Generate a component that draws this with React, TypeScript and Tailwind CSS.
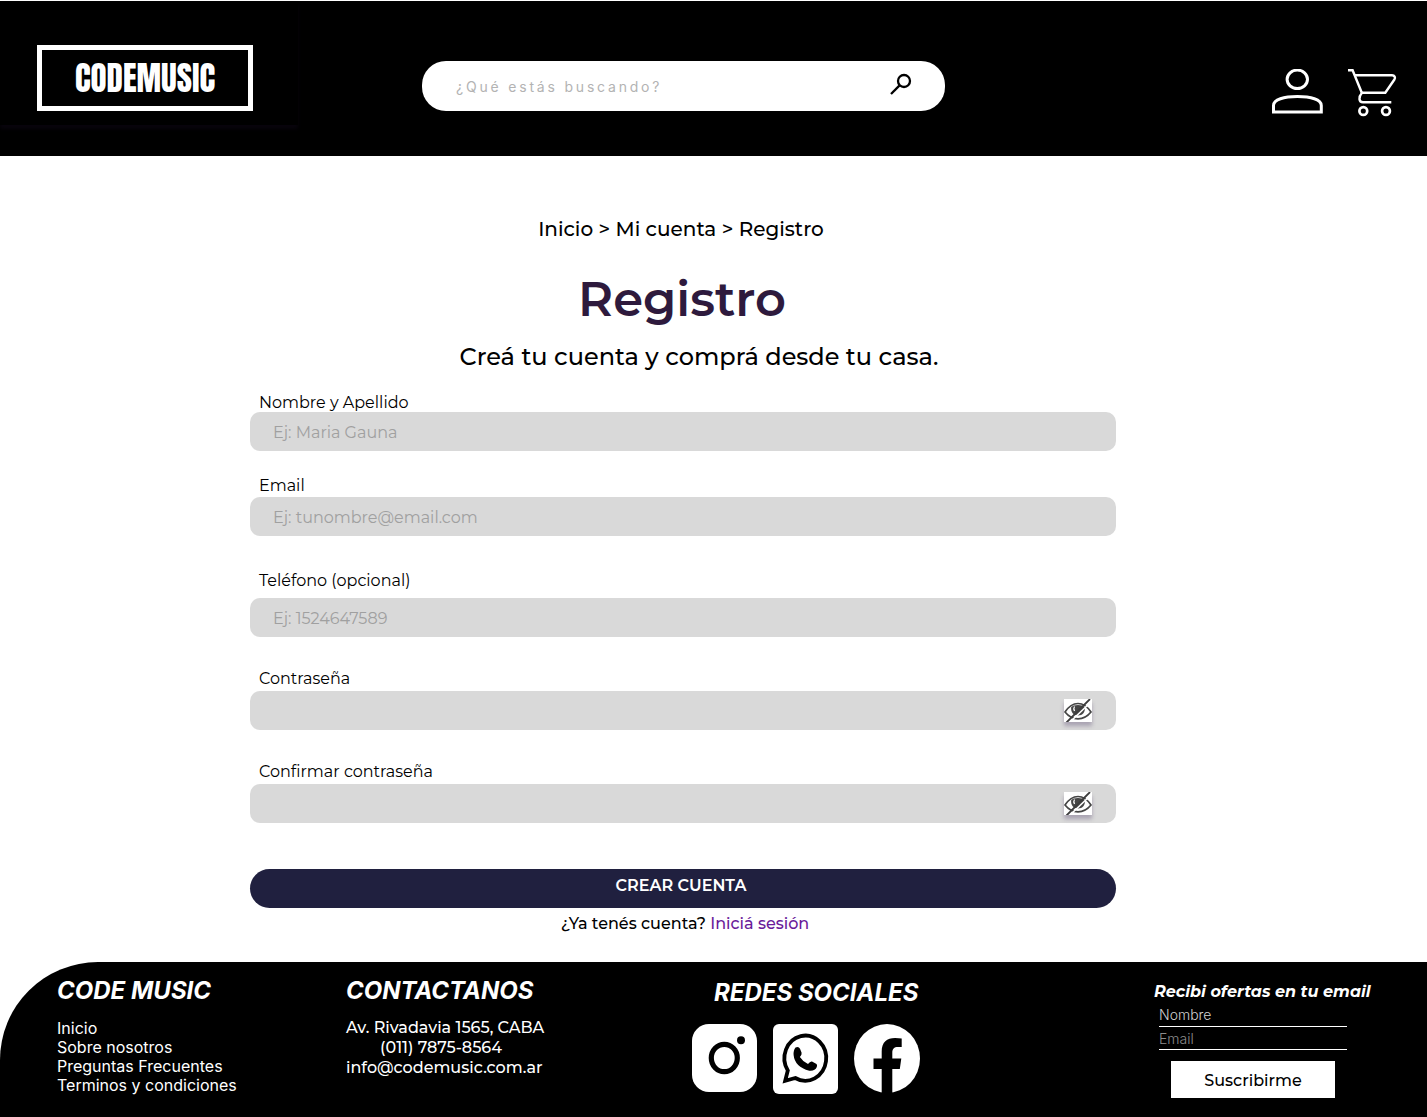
import React from "react";

type Field = {
  id: string;
  label: string;
  placeholder?: string;
  type: string;
  spacing: string;
};

const fields: Field[] = [
  { id: "nombre", label: "Nombre y Apellido", placeholder: "Ej: Maria Gauna", type: "text", spacing: "mt-[21px]" },
  { id: "email", label: "Email", placeholder: "Ej: tunombre@email.com", type: "email", spacing: "mt-[26px] gap-[2px]" },
  { id: "telefono", label: "Teléfono (opcional)", placeholder: "Ej: 1524647589", type: "tel", spacing: "mt-9 gap-2" },
  { id: "clave", label: "Contraseña", type: "password", spacing: "mt-[33px] gap-[3px]" },
  { id: "clave2", label: "Confirmar contraseña", type: "password", spacing: "mt-[33px] gap-[3px]" },
];

const links = ["Inicio", "Sobre nosotros", "Preguntas Frecuentes", "Terminos y condiciones"];

function SearchIcon() {
  return (
    <svg width="22" height="22" viewBox="0 0 22 22" fill="none" stroke="black" strokeWidth="2.3">
      <circle cx="14" cy="8" r="6" />
      <path d="M9.6 12.4 1 21" />
    </svg>
  );
}

function UserIcon() {
  return (
    <svg width="51" height="48" viewBox="0 0 51 48" fill="none" stroke="white" strokeWidth="3">
      <ellipse cx="25.3" cy="10.3" rx="10.2" ry="9.2" />
      <path d="M1.5 43V36.500C1.5 30.500 12 27.500 25.4 27.500s23.900 3 23.900 9v6.500z" />
    </svg>
  );
}

function CartIcon() {
  return (
    <svg width="49" height="48" viewBox="0 0 49 48" fill="none" stroke="white" strokeWidth="2.4">
      <path d="M0 1.200h4.600L14 24.200" />
      <path d="M7 6.200h37c2.600 0 3.700 2.300 2.400 4.300L37.300 23.700H14c-3.800 4.300-3.300 9.500 1 9.500h28.300" />
      <circle cx="15.300" cy="42" r="3.900" strokeWidth="2.700" />
      <circle cx="38" cy="42" r="3.900" strokeWidth="2.700" />
    </svg>
  );
}

function EyeOffIcon() {
  return (
    <svg width="28" height="23" viewBox="0 0 28 23" fill="none">
      <path d="M1 13C5 7 9.500 4.500 14 4.500S23 7 27 13c-4 5-8.500 6.800-13 6.800S5 18 1 13z" stroke="#454545" strokeWidth="1.700" />
      <path d="M7.200 8C6.500 13 9.500 16.500 14 16.500s7.500-3.500 6.800-8.500C18.500 5.200 9.500 5.200 7.200 8z" fill="#454545" />
      <path d="M10.500 7.500c-1 1.500-.800 3 0 4.500" stroke="white" strokeWidth="1.300" />
      <path d="M5 24 28.500 1.500" stroke="white" strokeWidth="1.500" />
      <path d="M2.500 23.500 26 0" stroke="#3c3c3c" strokeWidth="1.800" />
    </svg>
  );
}

function InstagramIcon() {
  return (
    <svg width="65" height="68" viewBox="0 0 65 68">
      <rect width="65" height="68" rx="17" fill="white" />
      <ellipse cx="32.300" cy="34" rx="13" ry="13.700" fill="none" stroke="black" strokeWidth="5.200" />
      <circle cx="49" cy="16.300" r="4" fill="black" />
    </svg>
  );
}

function WhatsappIcon() {
  return (
    <svg width="65" height="70" viewBox="0 0 65 70">
      <rect width="65" height="70" rx="6" fill="white" />
      <path
        d="M12.200 56.800 14.800 46.500A20.900 22.600 0 1 1 22.300 54z"
        fill="none"
        stroke="black"
        strokeWidth="3.800"
      />
      <path
        d="M22.500 23.500q3.200-1.500 4.500 1.300l1.600 4q.500 1.700-1.700 4.200 3 4.800 8.100 7 2.200-3 4-2.500l4.500 2.500q1 .800.300 3-2 4.400-7.500 3.700-14.500-3.700-15.700-15.700-.300-5 1.900-7.500z"
        fill="black"
      />
    </svg>
  );
}

function FacebookIcon() {
  return (
    <svg width="66" height="69" viewBox="0 0 66 69">
      <ellipse cx="33" cy="34.500" rx="33" ry="34.500" fill="white" />
      <path
        d="M27.700 69V45H19.500V34.500h8.200V27.500C27.700 18 33 14 41 14q4 0 6.700.600v8.400H44c-4 0-5.700 2-5.700 5.500v6H47.300L45.800 45H38.300V69z"
        fill="black"
      />
    </svg>
  );
}

export default function App() {
  return (
    <div className="min-h-screen bg-white font-['Montserrat','Inter',sans-serif] text-black">
      <header className="flex h-[156px] items-start border-t border-white bg-black pr-[30px]">
        <a
          href="#"
          className="flex h-[124px] w-[298px] shrink-0 items-start pl-[37px] pt-11 shadow-[0_4px_4px_#08040c]"
        >
          <span className="flex h-[66px] w-[216px] items-center justify-center border-[5px] border-white font-['Anton','Roboto_Condensed',sans-serif] text-[33px] leading-none text-white">
            CODEMUSIC
          </span>
        </a>
        <form className="ml-[124px] mr-[327px] mt-[60px] flex h-[50px] flex-1 items-center rounded-3xl bg-white pl-[34px] pr-[33px]">
          <input
            type="search"
            aria-label="Buscar"
            placeholder="¿Qué estás buscando?"
            className="min-w-0 flex-1 bg-transparent pt-[2px] font-['Inter',sans-serif] text-sm tracking-[0.2em] outline-none placeholder:text-[#b3b3b3]"
          />
          <button type="button" aria-label="Buscar" className="pb-1">
            <SearchIcon />
          </button>
        </form>
        <nav className="flex shrink-0 gap-[25px] pt-[68px]">
          <a href="#" aria-label="Mi cuenta">
            <UserIcon />
          </a>
          <a href="#" aria-label="Carrito">
            <CartIcon />
          </a>
        </nav>
      </header>

      <main className="flex flex-col pb-[27px] pl-[250px] pr-[311px] pt-[57px]">
        <nav className="pr-1 text-center text-xl font-medium leading-8">
          <a href="#">Inicio</a> &gt; <a href="#">Mi cuenta</a> &gt; <a href="#">Registro</a>
        </nav>
        <h1 className="mt-6 pr-[2px] text-center text-5xl font-semibold leading-[60px] text-[#2e1a3d]">Registro</h1>
        <p className="ml-8 mt-3 text-center text-2xl font-medium leading-8">
          Creá tu cuenta y comprá desde tu casa.
        </p>
        <form className="flex flex-col">
          {fields.map((f) => (
            <div key={f.id} className={`flex flex-col ${f.spacing}`}>
              <label htmlFor={f.id} className="ml-[9px] leading-[18px]">
                {f.label}
              </label>
              <div className="flex h-[39px] items-center rounded-[10px] bg-[#d9d9d9] pl-[23px] pr-6">
                <input
                  id={f.id}
                  type={f.type}
                  placeholder={f.placeholder}
                  className="min-w-0 flex-1 bg-transparent pt-[2px] outline-none placeholder:text-[#a0a0a0]"
                />
                {f.type === "password" && (
                  <button
                    type="button"
                    aria-label="Mostrar contraseña"
                    className="bg-white shadow-[0_4px_4px_rgba(60,40,90,0.3)]"
                  >
                    <EyeOffIcon />
                  </button>
                )}
              </div>
            </div>
          ))}
          <button
            type="submit"
            className="mt-[46px] h-[39px] rounded-full bg-[#20203f] pb-[6px] pr-1 font-semibold text-white"
          >
            CREAR CUENTA
          </button>
        </form>
        <p className="mt-[5px] pl-1 text-center font-medium leading-[22px]">
          ¿Ya tenés cuenta?{" "}
          <a href="#" className="text-[#6a1b9a]">
            Iniciá sesión
          </a>
        </p>
      </main>

      <footer className="flex min-h-[155px] items-start rounded-tl-[98px] bg-black pl-[57px] pr-14 pt-[13px] text-white">
        <section className="w-[289px] shrink-0 font-['Inter',sans-serif]">
          <h2 className="text-2xl font-bold italic leading-8">CODE MUSIC</h2>
          <ul className="mt-3 leading-[19px]">
            {links.map((l) => (
              <li key={l}>
                <a href="#">{l}</a>
              </li>
            ))}
          </ul>
        </section>
        <section className="w-[346px] shrink-0">
          <h2 className="font-['Inter',sans-serif] text-2xl font-bold italic leading-8">CONTACTANOS</h2>
          <address className="mt-[11px] flex w-[190px] flex-col whitespace-nowrap font-medium not-italic leading-5">
            <span>Av. Rivadavia 1565, CABA</span>
            <a href="#" className="text-center">
              (011) 7875-8564
            </a>
            <a href="#">info@codemusic.com.ar</a>
          </address>
        </section>
        <section className="shrink-0">
          <h2 className="pl-[22px] pt-[2px] font-['Inter',sans-serif] text-2xl font-bold italic leading-8">
            REDES SOCIALES
          </h2>
          <div className="mt-[15px] flex items-start gap-4">
            <a href="#" aria-label="Instagram">
              <InstagramIcon />
            </a>
            <a href="#" aria-label="WhatsApp">
              <WhatsappIcon />
            </a>
            <a href="#" aria-label="Facebook">
              <FacebookIcon />
            </a>
          </div>
        </section>
        <form className="ml-auto w-[217px] pt-[6px]">
          <h2 className="whitespace-nowrap font-bold italic leading-[22px]">Recibi ofertas en tu email</h2>
          <input
            type="text"
            aria-label="Nombre"
            placeholder="Nombre"
            className="ml-[5px] block h-6 w-[188px] border-b border-white bg-transparent font-['Inter',sans-serif] text-sm font-light outline-none placeholder:text-[#d0d0d0]"
          />
          <input
            type="email"
            aria-label="Email"
            placeholder="Email"
            className="ml-[5px] block h-[23px] w-[188px] border-b border-white bg-transparent font-['Inter',sans-serif] text-sm font-light outline-none placeholder:text-[#8c8c8c]"
          />
          <button type="submit" className="ml-[17px] mt-[11px] block h-[37px] w-[164px] bg-white pt-[2px] font-medium text-black">
            Suscribirme
          </button>
        </form>
      </footer>
    </div>
  );
}
